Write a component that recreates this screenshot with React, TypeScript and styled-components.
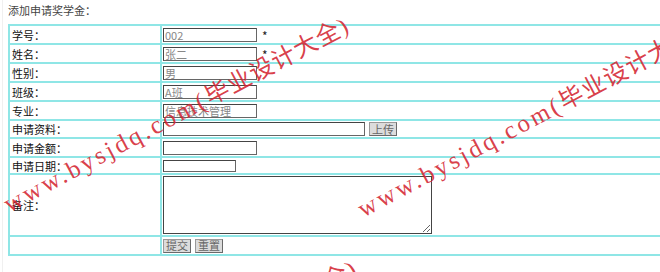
import React from "react";
import styled, { createGlobalStyle } from "styled-components";

const Global = createGlobalStyle`
  html, body { margin: 0; padding: 0; background: #fff; overflow: hidden; }
  body { font-family: "Noto Sans CJK SC", "Liberation Sans", sans-serif; font-size: 12px; }
`;

const Page = styled.div`
  position: relative;
  width: 660px;
  height: 272px;
  overflow: hidden;
  padding: 0 0 0 8px;
  box-sizing: border-box;
`;

const Frame = styled.div`
  position: absolute;
  left: 2px;
  top: 0;
  bottom: 0;
  width: 1px;
  background: #f0f0f0;
`;

const Title = styled.div`
  height: 24px;
  line-height: 20px;
  font-size: 11px;
  color: #444;
`;

const Table = styled.table`
  width: 720px;
  border-collapse: collapse;
  border: 2px solid #8fe6e6;
`;

const Row = styled.tr<{ $h: number }>`
  height: ${(p) => p.$h}px;
`;

const LabelCell = styled.td`
  width: 148px;
  border: 2px solid #8fe6e6;
  padding: 0 0 0 2px;
  font-size: 11px;
  color: #111;
  vertical-align: middle;
  line-height: 14px;
`;

const FieldCell = styled.td`
  border: 2px solid #8fe6e6;
  padding: 0 0 0 1px;
  vertical-align: middle;
  line-height: 14px;
`;

const FieldLine = styled.div<{ $gap?: number }>`
  display: flex;
  align-items: center;
  gap: ${(p) => p.$gap ?? 5}px;
`;

const TextInput = styled.input<{ $w: number; $h?: number }>`
  box-sizing: border-box;
  width: ${(p) => p.$w}px;
  height: ${(p) => p.$h ?? 14}px;
  margin: 0;
  padding: 0 1px;
  border: 1px solid #444;
  border-right-color: #666;
  border-bottom-color: #666;
  font-family: "Noto Sans CJK SC", "Liberation Sans", sans-serif;
  font-size: 11px;
  line-height: 12px;
  color: #888;
  background: #fff;
  outline: none;
`;

const Star = styled.span`
  font-size: 12px;
  color: #222;
  line-height: 12px;
  padding-top: 3px;
`;

const Btn = styled.button`
  box-sizing: border-box;
  width: 28px;
  height: 14px;
  margin: 0;
  padding: 0;
  border: 1px solid #6a6a6a;
  border-top-color: #999;
  border-left-color: #999;
  background: #dcdcdc;
  color: #666;
  font-family: "Noto Sans CJK SC", "Liberation Sans", sans-serif;
  font-size: 11px;
  line-height: 11px;
`;

const Area = styled.textarea`
  box-sizing: border-box;
  width: 269px;
  height: 58px;
  margin: 0;
  padding: 0;
  border: 1px solid #444;
  display: block;
  font-size: 11px;
`;

const Mark = styled.div<{ $x: number; $y: number }>`
  position: absolute;
  left: ${(p) => p.$x}px;
  top: ${(p) => p.$y}px;
  transform-origin: 0 100%;
  transform: rotate(-28deg);
  white-space: nowrap;
  color: rgba(212, 38, 50, 0.88);
  font-family: "Liberation Serif", "Noto Sans CJK SC", serif;
  font-size: 25px;
  line-height: 28px;
  pointer-events: none;
`;

const MarkLatin = styled.span`
  letter-spacing: 3px;
`;

const MarkCjk = styled.span`
  font-size: 24px;
  letter-spacing: 1px;
`;

const rows: { label: string; h: number; value?: string; w?: number; star?: boolean }[] = [
  { label: "学号：", h: 19, value: "002", w: 94, star: true },
  { label: "姓名：", h: 19, value: "张二", w: 94, star: true },
  { label: "性别：", h: 19, value: "男", w: 94 },
  { label: "班级：", h: 19, value: "A班", w: 94 },
  { label: "专业：", h: 19, value: "信息技术管理", w: 94 },
];

function Watermark({ x, y }: { x: number; y: number }) {
  return (
    <Mark $x={x} $y={y}>
      <MarkLatin>www.bysjdq.com(</MarkLatin>
      <MarkCjk>毕业设计大全)</MarkCjk>
    </Mark>
  );
}

export default function App() {
  return (
    <>
      <Global />
      <Page>
        <Frame />
        <Title>添加申请奖学金：</Title>
        <Table>
          <tbody>
            {rows.map((r) => (
              <Row $h={r.h} key={r.label}>
                <LabelCell>{r.label}</LabelCell>
                <FieldCell>
                  <FieldLine>
                    <TextInput $w={r.w!} defaultValue={r.value} />
                    {r.star && <Star>*</Star>}
                  </FieldLine>
                </FieldCell>
              </Row>
            ))}
            <Row $h={18}>
              <LabelCell>申请资料：</LabelCell>
              <FieldCell>
                <FieldLine $gap={4}>
                  <TextInput $w={202} defaultValue="" />
                  <Btn>上传</Btn>
                </FieldLine>
              </FieldCell>
            </Row>
            <Row $h={19}>
              <LabelCell>申请金额：</LabelCell>
              <FieldCell>
                <FieldLine>
                  <TextInput $w={94} defaultValue="" />
                </FieldLine>
              </FieldCell>
            </Row>
            <Row $h={17}>
              <LabelCell>申请日期：</LabelCell>
              <FieldCell>
                <FieldLine>
                  <TextInput $w={73} $h={12} defaultValue="" />
                </FieldLine>
              </FieldCell>
            </Row>
            <Row $h={62}>
              <LabelCell>备注：</LabelCell>
              <FieldCell>
                <Area />
              </FieldCell>
            </Row>
            <Row $h={19}>
              <LabelCell />
              <FieldCell>
                <FieldLine $gap={4}>
                  <Btn>提交</Btn>
                  <Btn>重置</Btn>
                </FieldLine>
              </FieldCell>
            </Row>
          </tbody>
        </Table>
        <Watermark x={12} y={190} />
        <Watermark x={366} y={195} />
        <Watermark x={20} y={433} />
      </Page>
    </>
  );
}
